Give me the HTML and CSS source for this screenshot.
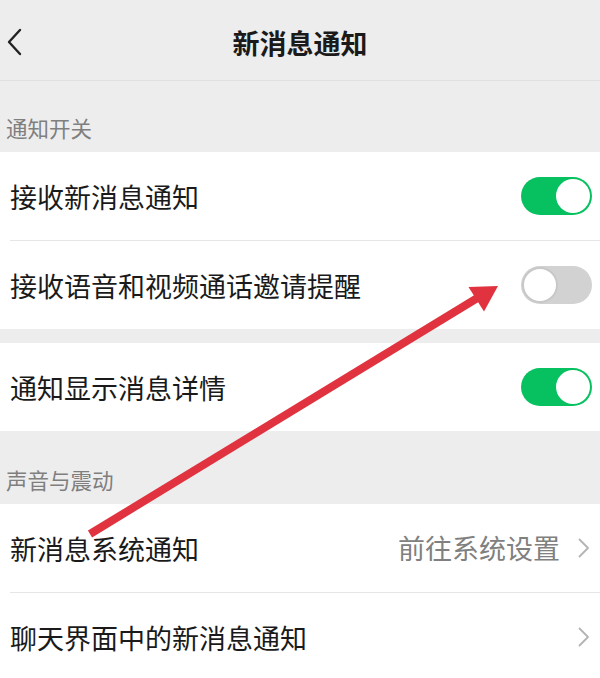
FILE: index.html
```html
<!DOCTYPE html>
<html lang="zh-CN">
<head>
<meta charset="utf-8">
<title>新消息通知</title>
<link rel="stylesheet" href="styles.css">
</head>
<body>
<div class="page">
  <header class="navbar">
    <span class="back">
      <svg width="16" height="28" viewBox="0 0 16 28"><path d="M14 2 L3 14 L14 26" fill="none" stroke="#222" stroke-width="2.4" stroke-linecap="round" stroke-linejoin="round"/></svg>
    </span>
    <h1 class="title">新消息通知</h1>
    <span class="nav-spacer"></span>
  </header>

  <div class="section-label">通知开关</div>
  <div class="group">
    <div class="row">
      <span class="row-text">接收新消息通知</span>
      <span class="switch on"><span class="knob"></span></span>
    </div>
    <div class="divider"></div>
    <div class="row">
      <span class="row-text">接收语音和视频通话邀请提醒</span>
      <span class="switch off"><span class="knob"></span></span>
    </div>
  </div>
  <div class="gap"></div>
  <div class="group">
    <div class="row">
      <span class="row-text">通知显示消息详情</span>
      <span class="switch on"><span class="knob"></span></span>
    </div>
  </div>

  <div class="section-label tall">声音与震动</div>
  <div class="group">
    <div class="row">
      <span class="row-text">新消息系统通知</span>
      <span class="row-right">
        <span class="row-value">前往系统设置</span>
        <svg class="chev" width="12" height="20" viewBox="0 0 12 20"><path d="M1.5 1.5 L10 10 L1.5 18.5" fill="none" stroke="#b4b4b4" stroke-width="1.8" stroke-linecap="round" stroke-linejoin="round"/></svg>
      </span>
    </div>
    <div class="divider"></div>
    <div class="row">
      <span class="row-text">聊天界面中的新消息通知</span>
      <span class="row-right">
        <svg class="chev" width="12" height="20" viewBox="0 0 12 20"><path d="M1.5 1.5 L10 10 L1.5 18.5" fill="none" stroke="#b4b4b4" stroke-width="1.8" stroke-linecap="round" stroke-linejoin="round"/></svg>
      </span>
    </div>
  </div>

  <svg class="annotation" width="600" height="678" viewBox="0 0 600 678">
    <line x1="90" y1="534" x2="479" y2="297" stroke="#e0333f" stroke-width="8" stroke-linecap="butt"/>
    <polygon points="498,286 468.5,287 484,311.5" fill="#e0333f"/>
  </svg>
</div>
</body>
</html>
```

FILE: styles.css
```css
html, body {
  margin: 0;
  padding: 0;
}
body {
  background: #ededed;
  font-family: "Noto Sans CJK SC", "Noto Sans", sans-serif;
  color: #1a1a1a;
}
.page {
  position: relative;
  width: 600px;
  height: 678px;
  overflow: hidden;
  background: #ededed;
}
.navbar {
  height: 80px;
  display: flex;
  align-items: center;
  justify-content: space-between;
  border-bottom: 1px solid #e0e0e0;
  padding: 0 6px;
  box-sizing: content-box;
}
.back {
  width: 60px;
  display: flex;
  align-items: center;
  padding-top: 4px;
}
.nav-spacer {
  width: 60px;
}
.title {
  margin: 0;
  font-size: 27px;
  font-weight: 700;
  color: #1a1a1a;
  line-height: 30px;
  padding-top: 6px;
}
.section-label {
  height: 71px;
  box-sizing: border-box;
  display: flex;
  align-items: flex-end;
  padding: 0 0 9px 6px;
  font-size: 21.5px;
  line-height: 30px;
  color: #7f7f7f;
}
.section-label.tall {
  height: 73px;
}
.group {
  background: #fff;
}
.gap {
  height: 14px;
}
.row {
  height: 88px;
  display: flex;
  align-items: center;
  justify-content: space-between;
  padding: 0 8px 0 10px;
}
.row-text {
  font-size: 27px;
  line-height: 32px;
  color: #1a1a1a;
  padding-top: 2px;
}
.divider {
  height: 1px;
  margin-left: 10px;
  background: #e6e6e6;
}
.row-right {
  display: flex;
  align-items: center;
  gap: 18px;
  padding-right: 2px;
}
.row-value {
  font-size: 27px;
  line-height: 32px;
  color: #808080;
}
.chev {
  display: block;
}
.switch {
  width: 71px;
  height: 38px;
  border-radius: 19px;
  box-sizing: border-box;
  display: flex;
  align-items: center;
  padding: 2px;
}
.switch.on {
  background: #07c160;
  justify-content: flex-end;
}
.switch.off {
  background: #d2d2d2;
  justify-content: flex-start;
  padding: 1px;
}
.knob {
  width: 34px;
  height: 34px;
  border-radius: 50%;
  background: #fff;
  box-sizing: border-box;
}
.switch.off .knob {
  width: 36px;
  height: 36px;
  border: 2px solid #c8c8c8;
}
.annotation {
  position: absolute;
  top: 0;
  left: 0;
  pointer-events: none;
}
```
